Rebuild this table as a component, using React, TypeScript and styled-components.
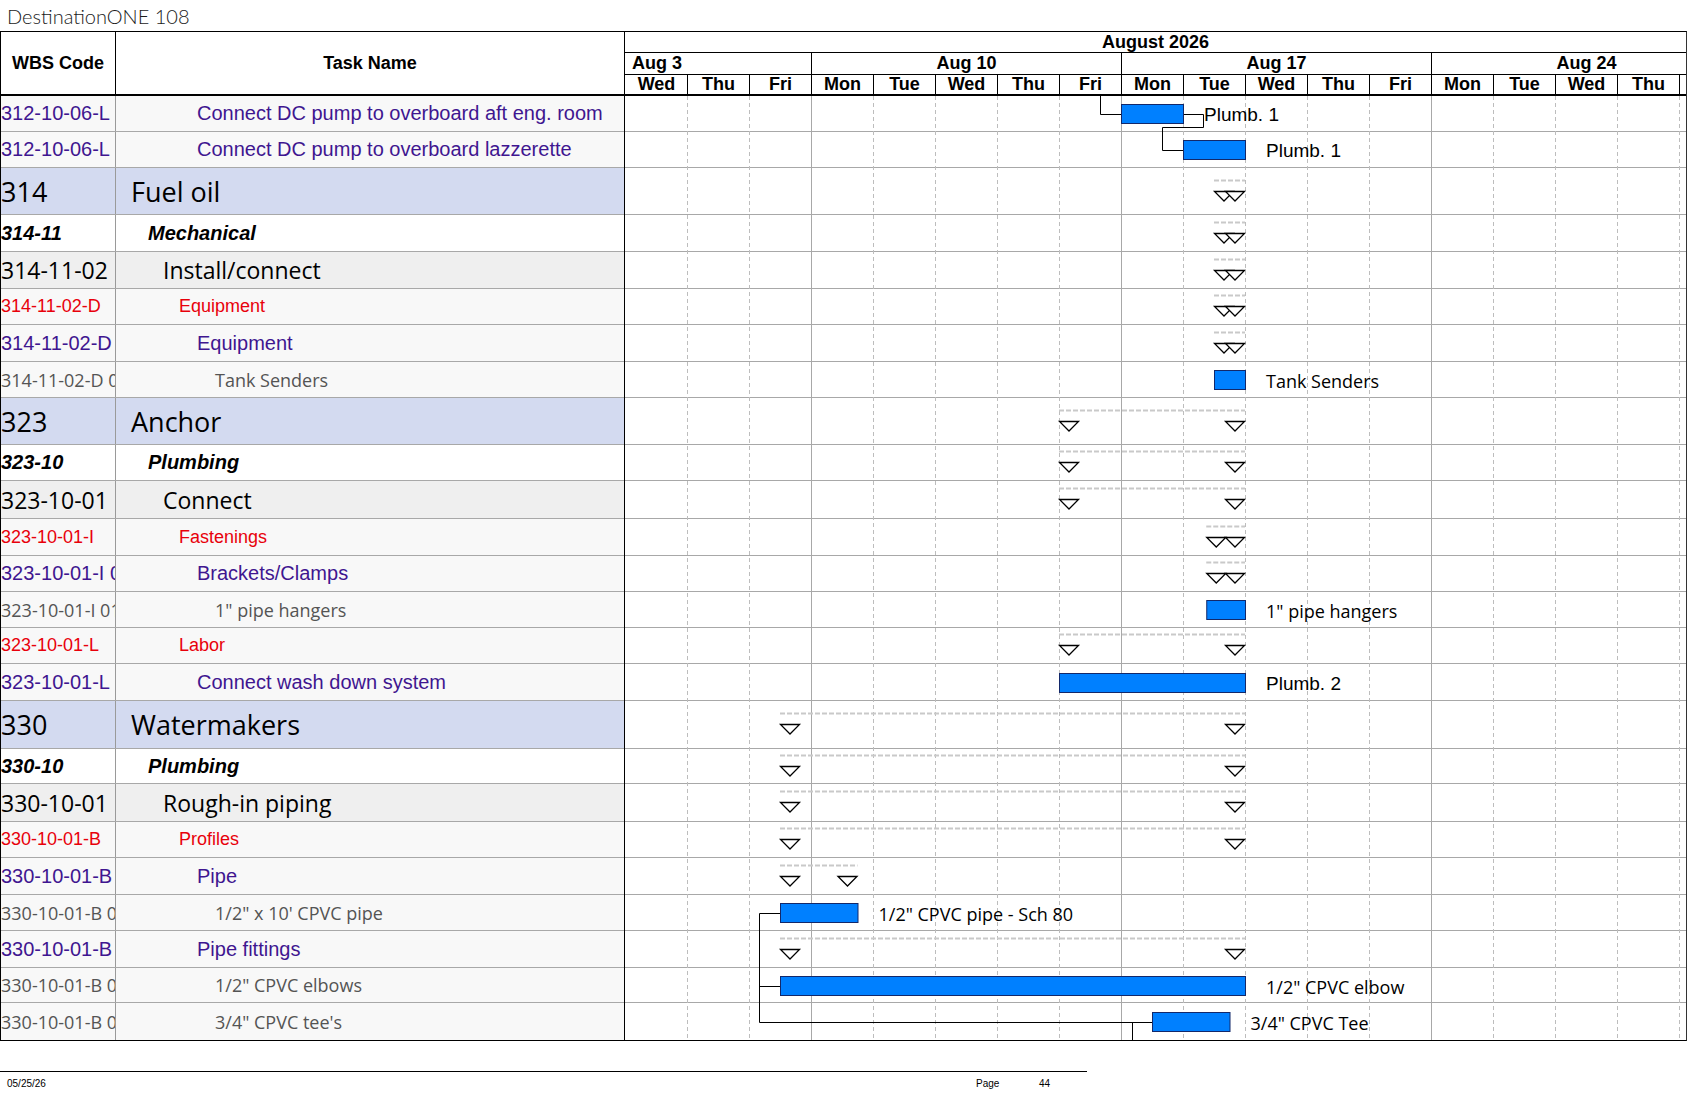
import React from "react";
import styled, { createGlobalStyle, css } from "styled-components";

const DAY = 62;

type Kind = "group" | "l2" | "l3" | "l4" | "l5" | "l6";

interface TaskRow {
  wbs: string;
  name: string;
  kind: Kind;
  h: number;
  summary?: [number, number];
  bar?: [number, number];
  label?: string;
  arialLabel?: boolean;
}

const rows: TaskRow[] = [
  { wbs: "312-10-06-L", name: "Connect DC pump to overboard aft eng. room", kind: "l5", h: 36, bar: [8, 9], label: "Plumb. 1", arialLabel: true },
  { wbs: "312-10-06-L", name: "Connect DC pump to overboard lazzerette", kind: "l5", h: 36, bar: [9, 10], label: "Plumb. 1", arialLabel: true },
  { wbs: "314", name: "Fuel oil", kind: "group", h: 47, summary: [9.5, 10] },
  { wbs: "314-11", name: "Mechanical", kind: "l2", h: 37, summary: [9.5, 10] },
  { wbs: "314-11-02", name: "Install/connect", kind: "l3", h: 37, summary: [9.5, 10] },
  { wbs: "314-11-02-D", name: "Equipment", kind: "l4", h: 36, summary: [9.5, 10] },
  { wbs: "314-11-02-D", name: "Equipment", kind: "l5", h: 37, summary: [9.5, 10] },
  { wbs: "314-11-02-D 01", name: "Tank Senders", kind: "l6", h: 36, bar: [9.5, 10], label: "Tank Senders" },
  { wbs: "323", name: "Anchor", kind: "group", h: 47, summary: [7, 10] },
  { wbs: "323-10", name: "Plumbing", kind: "l2", h: 36, summary: [7, 10] },
  { wbs: "323-10-01", name: "Connect", kind: "l3", h: 38, summary: [7, 10] },
  { wbs: "323-10-01-I", name: "Fastenings", kind: "l4", h: 37, summary: [9.375, 10] },
  { wbs: "323-10-01-I 01", name: "Brackets/Clamps", kind: "l5", h: 36, summary: [9.375, 10] },
  { wbs: "323-10-01-I 0101", name: "1\" pipe hangers", kind: "l6", h: 36, bar: [9.375, 10], label: "1\" pipe hangers" },
  { wbs: "323-10-01-L", name: "Labor", kind: "l4", h: 36, summary: [7, 10] },
  { wbs: "323-10-01-L", name: "Connect wash down system", kind: "l5", h: 37, bar: [7, 10], label: "Plumb. 2", arialLabel: true },
  { wbs: "330", name: "Watermakers", kind: "group", h: 48, summary: [2.5, 10] },
  { wbs: "330-10", name: "Plumbing", kind: "l2", h: 35, summary: [2.5, 10] },
  { wbs: "330-10-01", name: "Rough-in piping", kind: "l3", h: 38, summary: [2.5, 10] },
  { wbs: "330-10-01-B", name: "Profiles", kind: "l4", h: 36, summary: [2.5, 10] },
  { wbs: "330-10-01-B", name: "Pipe", kind: "l5", h: 37, summary: [2.5, 3.75] },
  { wbs: "330-10-01-B 01", name: "1/2\" x 10' CPVC pipe", kind: "l6", h: 36, bar: [2.5, 3.75], label: "1/2\" CPVC pipe - Sch 80" },
  { wbs: "330-10-01-B", name: "Pipe fittings", kind: "l5", h: 37, summary: [2.5, 10] },
  { wbs: "330-10-01-B 02", name: "1/2\" CPVC elbows", kind: "l6", h: 35, bar: [2.5, 10], label: "1/2\" CPVC elbow" },
  { wbs: "330-10-01-B 03", name: "3/4\" CPVC tee's", kind: "l6", h: 37, bar: [8.5, 9.75], label: "3/4\" CPVC Tee" },
];

const days = ["Wed", "Thu", "Fri", "Mon", "Tue", "Wed", "Thu", "Fri", "Mon", "Tue", "Wed", "Thu", "Fri", "Mon", "Tue", "Wed", "Thu", "Fri"];
const weeks = [
  { label: "Aug 3", days: 3, left: true },
  { label: "Aug 10", days: 5 },
  { label: "Aug 17", days: 5 },
  { label: "Aug 24", days: 5 },
];

const ARIAL = `"Liberation Sans", Arial, sans-serif`;
const OPEN = `"Open Sans", "Noto Sans", sans-serif`;

const kindLook: Record<Kind, { bg: string; font: string; size: number; color: string; weight: number; italic?: boolean; indent: number }> = {
  group: { bg: "#d3daf0", font: OPEN, size: 27, color: "#000", weight: 400, indent: 15 },
  l2: { bg: "#ffffff", font: ARIAL, size: 20, color: "#000", weight: 700, italic: true, indent: 32 },
  l3: { bg: "#efefef", font: OPEN, size: 23, color: "#000", weight: 400, indent: 47 },
  l4: { bg: "#f8f8f8", font: ARIAL, size: 18, color: "#e8000b", weight: 400, indent: 63 },
  l5: { bg: "#f8f8f8", font: ARIAL, size: 20, color: "#3f1690", weight: 400, indent: 81 },
  l6: { bg: "#f8f8f8", font: OPEN, size: 18, color: "#545454", weight: 400, indent: 99 },
};

const GlobalStyle = createGlobalStyle`
  html, body { margin: 0; padding: 0; background: #fff; }
  body { width: 1687px; height: 1097px; overflow: hidden; }
  * { box-sizing: border-box; }
`;

const Page = styled.div`
  width: 1687px;
  height: 1097px;
  display: flex;
  flex-direction: column;
`;

const Title = styled.div`
  height: 31px;
  display: flex;
  align-items: center;
  padding-left: 7px;
  font-family: Lato, "Liberation Sans", sans-serif;
  font-weight: 300;
  font-size: 20px;
  color: #1a1a1a;
`;

const Sheet = styled.div`
  display: flex;
  width: 1687px;
  border-top: 1px solid #000;
  border-bottom: 1px solid #000;
  border-right: 1px solid #333;
`;

const TablePane = styled.div`
  width: 625px;
  flex-shrink: 0;
  border-left: 1px solid #000;
  border-right: 1px solid #000;
  display: flex;
  flex-direction: column;
`;

const TableHeader = styled.div`
  height: 64px;
  display: grid;
  grid-template-columns: 115px 1fr;
  border-bottom: 2px solid #000;
`;

const HeaderCell = styled.div<{ $divider?: boolean }>`
  display: flex;
  align-items: center;
  justify-content: center;
  font-family: ${ARIAL};
  font-weight: 700;
  font-size: 18px;
  color: #000;
  ${(p) => p.$divider && css`border-right: 1px solid #000;`}
`;

const TableRowBox = styled.div<{ $kind: Kind; $h: number }>`
  height: ${(p) => p.$h}px;
  display: grid;
  grid-template-columns: 115px 1fr;
  background: ${(p) => kindLook[p.$kind].bg};
  border-bottom: 1px solid #a8a8a8;
  &:last-child { border-bottom: none; }
`;

const cellText = css<{ $kind: Kind }>`
  display: flex;
  align-items: center;
  white-space: nowrap;
  overflow: hidden;
  font-family: ${(p) => kindLook[p.$kind].font};
  font-size: ${(p) => kindLook[p.$kind].size}px;
  font-weight: ${(p) => kindLook[p.$kind].weight};
  font-style: ${(p) => (kindLook[p.$kind].italic ? "italic" : "normal")};
  color: ${(p) => kindLook[p.$kind].color};
`;

const CodeCell = styled.div<{ $kind: Kind }>`
  ${cellText};
  border-right: 1px solid #9a9a9a;
  padding-left: 0;
`;

const NameCell = styled.div<{ $kind: Kind }>`
  ${cellText};
  padding-left: ${(p) => kindLook[p.$kind].indent}px;
`;

const ChartPane = styled.div`
  flex: 1;
  min-width: 0;
  overflow: hidden;
  display: flex;
  flex-direction: column;
`;

const ChartHeader = styled.div`
  height: 64px;
  border-bottom: 2px solid #000;
  display: flex;
  flex-direction: column;
  font-family: ${ARIAL};
  font-weight: 700;
  font-size: 18px;
  color: #000;
  white-space: nowrap;
`;

const MonthRow = styled.div`
  height: 21px;
  border-bottom: 1px solid #000;
  display: flex;
  align-items: center;
  justify-content: center;
  line-height: 20px;
`;

const ScaleRow = styled.div<{ $h: number }>`
  height: ${(p) => p.$h}px;
  display: flex;
  padding-left: 1px;
  line-height: ${(p) => p.$h - 1}px;
  ${(p) => p.$h > 20 && css`border-bottom: 1px solid #000;`}
`;

const WeekCell = styled.div<{ $days: number; $left?: boolean }>`
  flex-shrink: 0;
  width: ${(p) => p.$days * DAY}px;
  border-right: 1px solid #000;
  display: flex;
  align-items: center;
  justify-content: ${(p) => (p.$left ? "flex-start" : "center")};
  padding-left: ${(p) => (p.$left ? "6px" : "0")};
`;

const DayCell = styled.div`
  flex-shrink: 0;
  width: ${DAY}px;
  border-right: 1px solid #000;
  text-align: center;
`;

const ChartBody = styled.div`
  position: relative;
  display: flex;
  flex-direction: column;
`;

const ChartRow = styled.div<{ $h: number }>`
  height: ${(p) => p.$h}px;
  border-bottom: 1px solid #a8a8a8;
  &:nth-last-child(2) { border-bottom: none; }
`;

const Overlay = styled.svg`
  position: absolute;
  top: 0;
  left: 0;
  pointer-events: none;
`;

const BarLabel = styled.text<{ $arial?: boolean }>`
  font-family: ${(p) => (p.$arial ? ARIAL : OPEN)};
  font-size: ${(p) => (p.$arial ? 19 : 18)}px;
  fill: #000;
`;

const Footer = styled.div`
  margin-top: 30px;
  width: 1087px;
  border-top: 1px solid #000;
  display: grid;
  grid-template-columns: 976px 63px 1fr;
  padding-top: 6px;
  font-family: ${ARIAL};
  font-size: 10px;
  line-height: 12px;
  color: #000;
`;

const FooterDate = styled.span`
  padding-left: 7px;
`;

const FooterText = styled.span``;

const tops: number[] = [];
{
  let y = 0;
  for (const r of rows) {
    tops.push(y);
    y += r.h;
  }
}
const BODY_H = rows.reduce((s, r) => s + r.h, 0);
const CHART_W = 1061;
const dx = (d: number) => d * DAY;

function Chart() {
  const gridLines = [];
  for (let k = 1; k <= 17; k++) {
    const x = k * DAY + 0.5;
    const week = k === 3 || k === 8 || k === 13;
    gridLines.push(
      <line
        key={k}
        x1={x}
        x2={x}
        y1={0}
        y2={BODY_H}
        stroke={week ? "#a8a8a8" : "#bdbdbd"}
        strokeWidth={1}
        strokeDasharray={week ? undefined : "4 3"}
      />
    );
  }

  const barTop = (i: number) => tops[i] + Math.round((rows[i].h - 20) / 2) + 0.5;

  return (
    <Overlay width={CHART_W} height={BODY_H} viewBox={`0 0 ${CHART_W} ${BODY_H}`}>
      {gridLines}
      {rows.map((r, i) => {
        if (r.summary) {
          const [s, e] = r.summary;
          const x0 = dx(s);
          const x1 = dx(e);
          const cy = tops[i] + Math.round(rows[i].h / 2) - 0.5;
          return (
            <g key={i}>
              <line x1={x0} x2={x1} y1={cy - 11} y2={cy - 11} stroke="#c9c9c9" strokeWidth={2} strokeDasharray="5 2" />
              <polygon points={`${x0 + 0.5},${cy} ${x0 + 19.5},${cy} ${x0 + 10},${cy + 9.5}`} fill="#fff" stroke="#000" strokeWidth={1.3} />
              <polygon points={`${x1 - 19.5},${cy} ${x1 - 0.5},${cy} ${x1 - 10},${cy + 9.5}`} fill="#fff" stroke="#000" strokeWidth={1.3} />
            </g>
          );
        }
        if (r.bar) {
          const [s, e] = r.bar;
          const y = barTop(i);
          return (
            <g key={i}>
              <rect x={dx(s) + 0.5} y={y} width={dx(e) - dx(s)} height={19} fill="#0080ff" stroke="#13286a" strokeWidth={1} />
              {r.label && (
                <BarLabel $arial={r.arialLabel} x={dx(e) + 21} y={y + 10} dominantBaseline="central">
                  {r.label}
                </BarLabel>
              )}
            </g>
          );
        }
        return null;
      })}
      <g fill="none" stroke="#000" strokeWidth={1}>
        <path d={`M 475.5 0 V ${barTop(0) + 10} H ${dx(8)}`} />
        <path d={`M ${dx(9) + 1} ${barTop(0) + 10} H 578.5 V 31.5 H 537.5 V ${barTop(1) + 10} H ${dx(9)}`} />
        <path d={`M 134.5 ${barTop(21) + 10} V ${barTop(24) + 10} H ${dx(8.5)}`} />
        <path d={`M 134.5 ${barTop(21) + 10} H ${dx(2.5)}`} />
        <path d={`M 134.5 ${barTop(23) + 10} H ${dx(2.5)}`} />
        <path d={`M 507.5 ${barTop(24) + 10} V ${BODY_H}`} />
      </g>
    </Overlay>
  );
}

export default function App() {
  return (
    <Page>
      <GlobalStyle />
      <Title>DestinationONE 108</Title>
      <Sheet>
        <TablePane>
          <TableHeader>
            <HeaderCell $divider>WBS Code</HeaderCell>
            <HeaderCell>Task Name</HeaderCell>
          </TableHeader>
          {rows.map((r, i) => (
            <TableRowBox key={i} $kind={r.kind} $h={r.h}>
              <CodeCell $kind={r.kind}>{r.wbs}</CodeCell>
              <NameCell $kind={r.kind}>{r.name}</NameCell>
            </TableRowBox>
          ))}
        </TablePane>
        <ChartPane>
          <ChartHeader>
            <MonthRow>August 2026</MonthRow>
            <ScaleRow $h={22}>
              {weeks.map((w) => (
                <WeekCell key={w.label} $days={w.days} $left={w.left}>
                  {w.label}
                </WeekCell>
              ))}
            </ScaleRow>
            <ScaleRow $h={19}>
              {days.map((d, i) => (
                <DayCell key={i}>{d}</DayCell>
              ))}
            </ScaleRow>
          </ChartHeader>
          <ChartBody>
            {rows.map((r, i) => (
              <ChartRow key={i} $h={r.h} />
            ))}
            <Chart />
          </ChartBody>
        </ChartPane>
      </Sheet>
      <Footer>
        <FooterDate>05/25/26</FooterDate>
        <FooterText>Page</FooterText>
        <FooterText>44</FooterText>
      </Footer>
    </Page>
  );
}
